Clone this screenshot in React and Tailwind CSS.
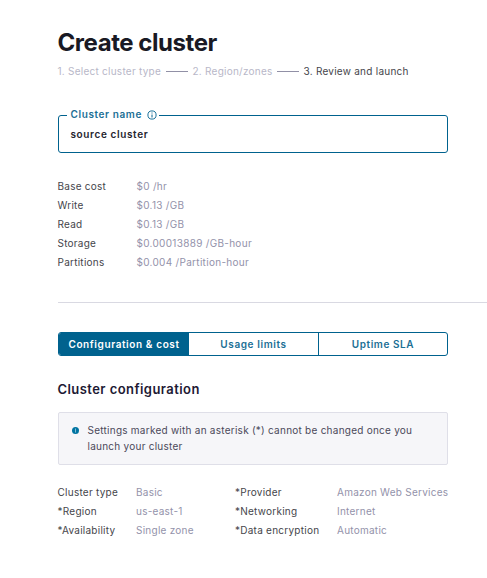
const costs = [
  ["Base cost", "$0 /hr"],
  ["Write", "$0.13 /GB"],
  ["Read", "$0.13 /GB"],
  ["Storage", "$0.00013889 /GB-hour"],
  ["Partitions", "$0.004 /Partition-hour"],
];
const config = [
  ["Cluster type", "Basic", "*Provider", "Amazon Web Services"],
  ["*Region", "us-east-1", "*Networking", "Internet"],
  ["*Availability", "Single zone", "*Data encryption", "Automatic"],
];

export default function App() {
  return (
    <main className="h-[578px] w-[487px] overflow-hidden bg-white pl-[57.5px] pt-[28px] font-['Inter',sans-serif] text-[10px] tracking-[0.25px] text-[#45454b]">
      <h1 className="h-[30px] text-[24px] font-bold leading-[30px] tracking-[-0.44px] text-[#191924]">Create cluster</h1>
      <nav className="mt-[5px] flex h-4 items-center whitespace-nowrap leading-4 text-[#b8b7c8]">
        <span className="w-[108.5px]">1. Select cluster type</span>
        <span className="h-px w-[22px] bg-[#9190a6]" />
        <span className="ml-[4.5px] w-[84.5px]">2. Region/zones</span>
        <span className="h-px w-[22px] bg-[#9190a6]" />
        <span className="ml-[4.5px] text-[#45454b]">3. Review and launch</span>
      </nav>
      <div className="relative ml-[0.5px] mt-[36px] h-[38px] w-[390px] rounded-[3px] border border-[#00628e] pl-[11.5px] pt-[10px]">
        <label className="absolute -top-[10px] left-2 flex h-4 items-center bg-white pl-[3.5px] pr-[2.5px] font-semibold leading-4 tracking-[0.6px] text-[#1b6f95]">
          Cluster name
          <svg className="ml-[5px] mt-[2px]" width="10" height="10" viewBox="0 0 10 10" fill="none" stroke="#00628e">
            <circle cx="5" cy="5" r="4.1" strokeWidth="0.9" />
            <path d="M5 4.5v3M5 2.5v1" />
          </svg>
        </label>
        <p className="font-semibold leading-4 tracking-[0.62px] text-[#24242d]">source cluster</p>
      </div>
      <dl className="mt-[24px]">
        {costs.map(([k, v]) => (
          <div key={k} className="flex h-[19px] items-center leading-[19px]">
            <dt className="w-[79px]">{k}</dt>
            <dd className="tracking-[0.3px] text-[#9392aa]">{v}</dd>
          </div>
        ))}
      </dl>
      <hr className="mt-[30px] border-[#d9d9e2]" />
      <div className="ml-[0.5px] mt-[29px] flex h-[24px] w-[390px] overflow-hidden rounded-[3px] border border-[#00628e] text-center leading-[22px] text-[#1b6f95]">
        <button className="w-[130px] bg-[#00628e] font-semibold tracking-[0.6px] text-white">Configuration &amp; cost</button>
        <button className="w-[130px] border-r border-[#00628e] font-semibold tracking-[0.6px]">Usage limits</button>
        <button className="flex-1 font-semibold tracking-[0.57px]">Uptime SLA</button>
      </div>
      <h2 className="mt-[23px] h-5 text-[13px] font-semibold leading-5 tracking-[0.44px] text-[#1d1933]">Cluster configuration</h2>
      <aside className="ml-[0.5px] mt-[13px] flex h-[53px] w-[390px] rounded-[2px] border border-[#dfdfe8] bg-[#f6f6f9] pl-[13px] pt-[9px] leading-4 text-[#4b4959]">
        <svg className="mr-[8.5px] mt-[5px] shrink-0" width="7" height="7" viewBox="0 0 7 7">
          <circle cx="3.5" cy="3.5" r="3.5" fill="#0074a2" />
          <path d="M3.5 1.5v4" stroke="#a5cfe0" strokeWidth="0.8" />
        </svg>
        <p>Settings marked with an asterisk (*) cannot be changed once you<br />launch your cluster</p>
      </aside>
      <div className="mt-[18px]">
        {config.map((r) => (
          <div key={r[0]} className="flex h-[19px] items-center whitespace-nowrap leading-[19px]">
            <span className="w-[78.5px]">{r[0]}</span>
            <span className="w-[99px] text-[#9392aa]">{r[1]}</span>
            <span className="w-[102px]">{r[2]}</span>
            <span className="text-[#9392aa]">{r[3]}</span>
          </div>
        ))}
      </div>
    </main>
  );
}
